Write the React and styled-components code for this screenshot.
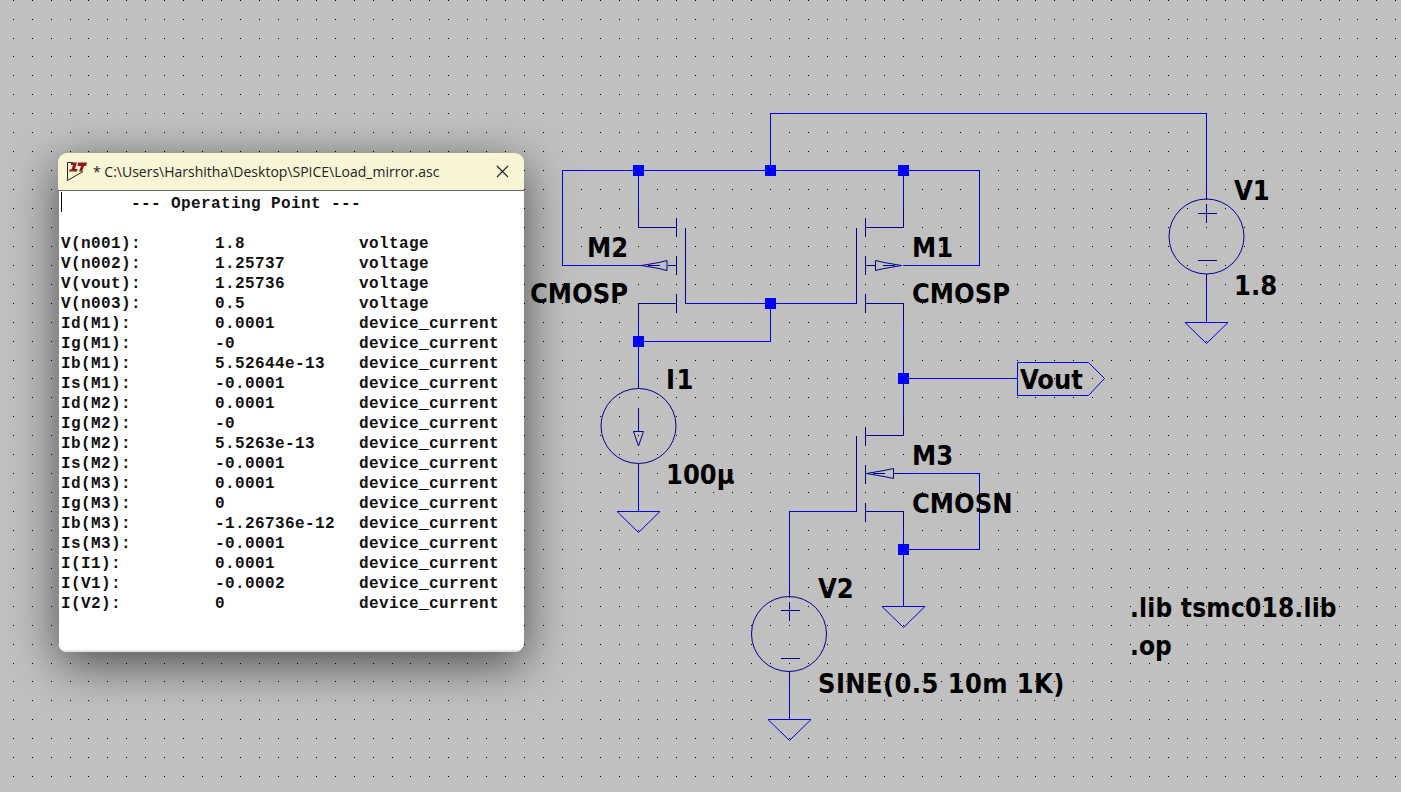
import React from 'react'
import styled, { createGlobalStyle } from 'styled-components'

const GlobalStyle = createGlobalStyle`
    html, body {
        margin: 0;
        padding: 0;
        background: #c0c0c0;
        overflow: hidden;
    }
`
const Page = styled.div`
    position: relative;
    width: 1401px;
    height: 792px;
    background: #c0c0c0;
    overflow: hidden;
`
const Schematic = styled.svg`
    display: block;
    width: 1401px;
    height: 792px;
`
const Wire = styled.path`
    fill: none;
    stroke: #0000e6;
    stroke-width: 1;
    shape-rendering: crispEdges;
`
const Body = styled.path`
    fill: none;
    stroke: #000090;
    stroke-width: 1;
    shape-rendering: crispEdges;
`
const Outline = styled.path`
    fill: none;
    stroke: ${props => props.color || '#000090'};
    stroke-width: 1;
`
const Source = styled.circle`
    fill: none;
    stroke: #000090;
    stroke-width: 1;
`
const Junction = styled.rect`
    fill: #0000ff;
    shape-rendering: crispEdges;
`
const Label = styled.text`
    font-family: "DejaVu Sans Condensed", "DejaVu Sans", sans-serif;
    font-stretch: condensed;
    font-weight: 700;
    font-size: 27px;
    letter-spacing: ${props => props.$spacing || 0}px;
    fill: #000;
`
const Directive = styled(Label)`
    font-size: 26px;
`
const OutputWindow = styled.div`
    position: absolute;
    left: 58px;
    top: 153px;
    width: 466px;
    height: 499px;
    display: flex;
    flex-direction: column;
    border-radius: 9px;
    overflow: hidden;
    box-shadow: 0 12px 48px rgba(0, 0, 0, 0.6);
`
const TitleBar = styled.div`
    height: 37px;
    flex: none;
    display: flex;
    align-items: center;
    padding: 0 15px 0 8px;
    background: #f8f5d6;
    border-bottom: 1px solid #6a6a6a;
`
const TitleText = styled.div`
    flex: 1;
    margin-left: 5px;
    font-family: "Open Sans", "Noto Sans", sans-serif;
    font-size: 14px;
    color: #222;
    white-space: pre;
`
const LogBody = styled.div`
    position: relative;
    flex: 1;
    background: #fff;
    border-left: 1px solid #8a8a8a;
    border-bottom: 2px solid #e4e4e4;
    padding: 3px 0 0 2px;
    font-family: "Liberation Mono", "Courier New", monospace;
    font-weight: 700;
    font-size: 16px;
    letter-spacing: 0.4px;
    line-height: 20px;
    color: #111;
`
const Caret = styled.div`
    position: absolute;
    left: 2px;
    top: 1px;
    width: 1px;
    height: 20px;
    background: #000;
`
const LogHeading = styled.div`
    height: 40px;
    padding-left: 70px;
`
const LogRow = styled.div`
    display: grid;
    grid-template-columns: 154px 144px 1fr;
    height: 20px;
    white-space: pre;
`

const gx = k => Math.floor(13.2 + 18.94 * k)
const gy = k => Math.floor(0.15 + 18.94 * k)

const gridDots = () => {
    let d = ''
    for (let i = 0; i < 74; i++) {
        for (let j = 0; j < 42; j++) {
            d += `M${gx(i)} ${gy(j)}h1v1h-1z`
        }
    }
    return d
}

const p = n => n + 0.5

const line = pts => pts.map((pt, i) => `${i ? 'L' : 'M'}${p(pt[0])} ${p(pt[1])}`).join('')

const wires = [
    [[770, 170], [770, 113], [1206, 113], [1206, 199]],
    [[641, 265], [562, 265], [562, 170], [979, 170], [979, 265], [902, 265]],
    [[638, 170], [638, 208]],
    [[903, 170], [903, 208]],
    [[685, 303], [856, 303]],
    [[638, 322], [638, 388]],
    [[638, 341], [770, 341], [770, 303]],
    [[638, 473], [638, 511]],
    [[903, 322], [903, 416]],
    [[903, 378], [1017, 378]],
    [[903, 530], [903, 606]],
    [[903, 549], [979, 549], [979, 473], [893, 473]],
    [[856, 511], [789, 511], [789, 597]],
    [[789, 681], [789, 719]],
    [[1206, 283], [1206, 322]],
]

const bodies = [
    [[638, 208], [638, 227], [676, 227]],
    [[676, 217], [676, 236]],
    [[676, 255], [676, 274]],
    [[676, 293], [676, 312]],
    [[685, 227], [685, 303]],
    [[638, 303], [676, 303]],
    [[638, 303], [638, 322]],
    [[667, 265], [676, 265]],
    [[903, 208], [903, 227], [865, 227]],
    [[865, 217], [865, 236]],
    [[865, 255], [865, 274]],
    [[865, 293], [865, 312]],
    [[856, 227], [856, 303]],
    [[865, 303], [903, 303], [903, 322]],
    [[865, 265], [875, 265]],
    [[903, 416], [903, 435], [865, 435]],
    [[865, 426], [865, 445]],
    [[865, 464], [865, 483]],
    [[865, 502], [865, 521]],
    [[856, 435], [856, 511]],
    [[865, 511], [903, 511], [903, 530]],
    [[893, 473], [903, 473]],
    [[638, 407], [638, 431]],
    [[638, 379], [638, 388]],
    [[638, 463], [638, 473]],
    [[1206, 189], [1206, 199]],
    [[1206, 273], [1206, 283]],
    [[789, 587], [789, 597]],
    [[789, 671], [789, 681]],
    [[1197, 213], [1216, 213]],
    [[1206, 203], [1206, 222]],
    [[1197, 260], [1216, 260]],
    [[780, 610], [799, 610]],
    [[789, 601], [789, 620]],
    [[780, 658], [799, 658]],
]

const junctions = [[638, 170], [770, 170], [903, 170], [770, 303], [638, 341], [903, 378], [903, 549]]

const Ground = ({ x, y }) => (
    <Outline color="#0000e6" d={`M${x - 21} ${y + 0.5}H${x + 22}L${x + 0.5} ${y + 21.5}Z`} />
)

const labels = [
    [587, 257, 'M2'],
    [530, 303, 'CMOSP'],
    [912, 257, 'M1'],
    [912, 303, 'CMOSP'],
    [1020, 389, 'Vout'],
    [912, 465, 'M3'],
    [912, 513, 'CMOSN'],
    [666, 389, 'I1', 1.5],
    [666, 484, '100µ'],
    [1234, 200, 'V1'],
    [1234, 295, '1.8'],
    [818, 598, 'V2'],
    [818, 693, 'SINE(0.5 10m 1K)', 0.4],
]

const logRows = [
    ['V(n001):', '1.8', 'voltage'],
    ['V(n002):', '1.25737', 'voltage'],
    ['V(vout):', '1.25736', 'voltage'],
    ['V(n003):', '0.5', 'voltage'],
    ['Id(M1):', '0.0001', 'device_current'],
    ['Ig(M1):', '-0', 'device_current'],
    ['Ib(M1):', '5.52644e-13', 'device_current'],
    ['Is(M1):', '-0.0001', 'device_current'],
    ['Id(M2):', '0.0001', 'device_current'],
    ['Ig(M2):', '-0', 'device_current'],
    ['Ib(M2):', '5.5263e-13', 'device_current'],
    ['Is(M2):', '-0.0001', 'device_current'],
    ['Id(M3):', '0.0001', 'device_current'],
    ['Ig(M3):', '0', 'device_current'],
    ['Ib(M3):', '-1.26736e-12', 'device_current'],
    ['Is(M3):', '-0.0001', 'device_current'],
    ['I(I1):', '0.0001', 'device_current'],
    ['I(V1):', '-0.0002', 'device_current'],
    ['I(V2):', '0', 'device_current'],
]

const App = () => {
    return (
        <Page>
            <GlobalStyle />
            <Schematic viewBox="0 0 1401 792">
                <path d={gridDots()} fill="#000" shapeRendering="crispEdges" />
                {wires.map((w, i) => <Wire key={i} d={line(w)} />)}
                {bodies.map((b, i) => <Body key={i} d={line(b)} />)}
                {junctions.map(([x, y]) => <Junction key={x + '-' + y} x={x - 5} y={y - 5} width="11" height="11" />)}

                <Outline d="M641.5 265.5L659 262.5L667 260.5V270.5L659 268.5Z M648 265.5H660" />
                <Outline d="M901.5 265.5L884 262.5L875.5 260.5V270.5L884 268.5Z M883 265.5H895" />
                <Outline d="M866.5 473.5L884 470.5L893.5 468.5V478.5L884 476.5Z M873 473.5H885" />
                <Outline d="M633.5 431.5H643.5L638.5 446Z" />

                <Source cx="638.5" cy="426" r="37.5" />
                <Source cx="1206.5" cy="236.5" r="37.5" />
                <Source cx="789" cy="634" r="37.5" />

                <Ground x={638} y={511} />
                <Ground x={903} y={606} />
                <Ground x={789} y={719} />
                <Ground x={1206} y={322} />

                <Outline color="#0000e6" d="M1017.5 362.5H1088.5L1104.5 378.5L1088.5 395.5H1017.5Z" />

                {labels.map(([x, y, text, spacing]) => <Label key={x + text} x={x} y={y} $spacing={spacing}>{text}</Label>)}
                <Directive x="1130" y="617" $spacing={0.2}>.lib tsmc018.lib</Directive>
                <Directive x="1130" y="655">.op</Directive>
            </Schematic>

            <OutputWindow>
                <TitleBar>
                    <svg width="22" height="21" viewBox="0 0 22 21">
                        <path d="M1.5 1.5V19.5L17 10.5" fill="none" stroke="#222" strokeWidth="1" />
                        <path d="M1.5 1.5H7" fill="none" stroke="#222" strokeWidth="1" />
                        <path d="M5 1.5H11L9 8H11.5L11 10.5H3L3.5 8.5H5.5L7 4H5Z" fill="#8c1c1c" />
                        <path d="M12 1.5H21L20 5H18L16 10.5H13L15 5H11.5Z" fill="#8c1c1c" />
                    </svg>
                    <TitleText>* C:\Users\Harshitha\Desktop\SPICE\Load_mirror.asc</TitleText>
                    <svg width="13" height="13" viewBox="0 0 13 13">
                        <path d="M1 1L12 12M12 1L1 12" fill="none" stroke="#222" strokeWidth="1.1" />
                    </svg>
                </TitleBar>
                <LogBody>
                    <Caret />
                    <LogHeading>--- Operating Point ---</LogHeading>
                    {logRows.map(([name, value, kind]) => (
                        <LogRow key={name}>
                            <span>{name}</span>
                            <span>{value}</span>
                            <span>{kind}</span>
                        </LogRow>
                    ))}
                </LogBody>
            </OutputWindow>
        </Page>
    )
}

export default App
